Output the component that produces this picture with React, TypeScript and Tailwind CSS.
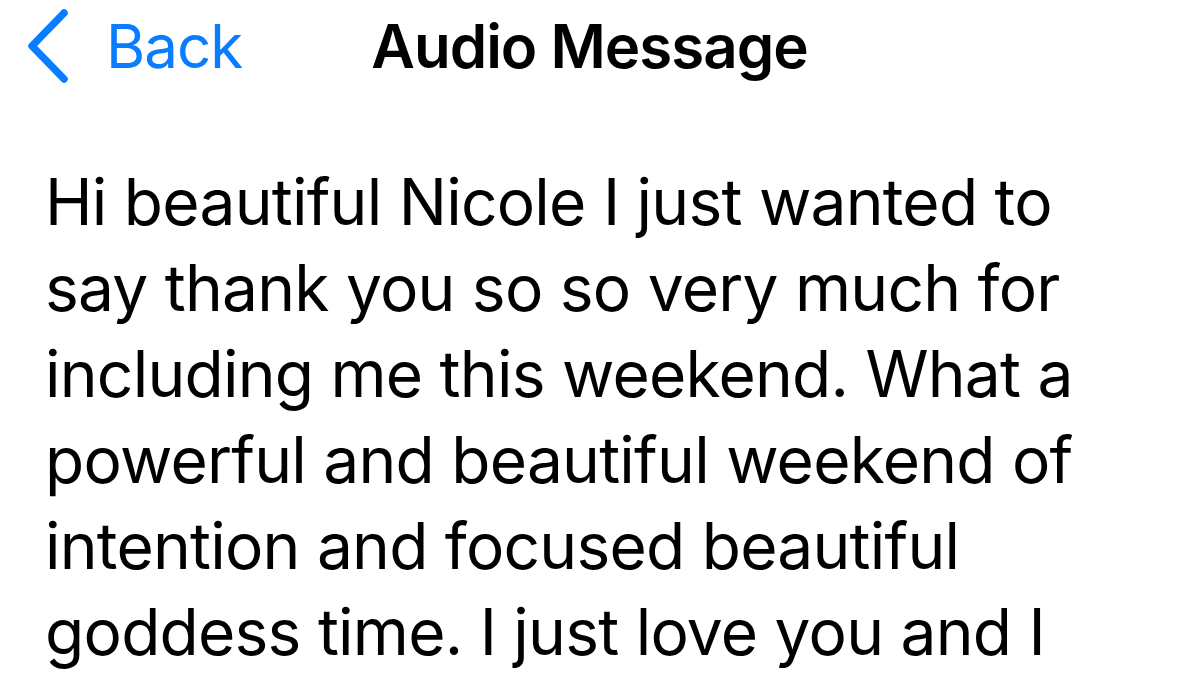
const lines = [
  "Hi beautiful Nicole I just wanted to",
  "say thank you so so very much for",
  "including me this weekend. What a",
  "powerful and beautiful weekend of",
  "intention and focused beautiful",
  "goddess time. I just love you and I",
];

function BackChevron() {
  return (
    <svg width="46" height="74" viewBox="0 0 46 74" fill="none" className="shrink-0">
      <path
        d="M38 4 L6 37 L38 70"
        stroke="#0A7CFF"
        strokeWidth="7.5"
        strokeLinecap="round"
        strokeLinejoin="round"
      />
    </svg>
  );
}

export default function App() {
  return (
    <div
      className="relative h-[685px] w-[1179px] overflow-hidden bg-white text-black"
      style={{ fontFamily: "Inter, 'Noto Sans', sans-serif" }}
    >
      {/* Nav bar */}
      <div className="relative flex h-[92px] items-center">
        <button className="flex items-center gap-[34px] pl-[26px] text-[#0A7CFF]">
          <BackChevron />
          <span className="text-[60px] leading-none tracking-[-1px]">Back</span>
        </button>
        <div className="pointer-events-none absolute inset-x-0 top-0 flex h-[92px] items-center justify-center">
          <span className="text-[60px] font-semibold leading-none tracking-[-1px]">
            Audio Message
          </span>
        </div>
      </div>

      {/* Transcript */}
      <p className="mt-[67px] pl-[45px] text-[64px] leading-[86px] tracking-[-0.75px]">
        {lines.map((l, i) => (
          <span key={i} className="block whitespace-nowrap">
            {l}
          </span>
        ))}
      </p>
    </div>
  );
}
